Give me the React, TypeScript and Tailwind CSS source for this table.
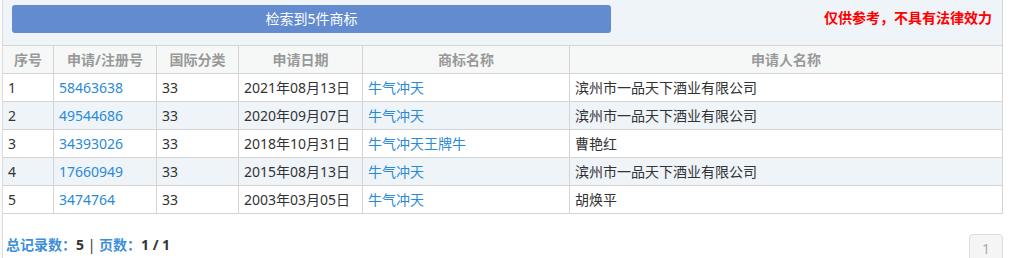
import React from "react";

const rows = [
  { no: "1", reg: "58463638", cls: "33", date: "2021年08月13日", name: "牛气冲天", app: "滨州市一品天下酒业有限公司" },
  { no: "2", reg: "49544686", cls: "33", date: "2020年09月07日", name: "牛气冲天", app: "滨州市一品天下酒业有限公司" },
  { no: "3", reg: "34393026", cls: "33", date: "2018年10月31日", name: "牛气冲天王牌牛", app: "曹艳红" },
  { no: "4", reg: "17660949", cls: "33", date: "2015年08月13日", name: "牛气冲天", app: "滨州市一品天下酒业有限公司" },
  { no: "5", reg: "3474764", cls: "33", date: "2003年03月05日", name: "牛气冲天", app: "胡焕平" },
];

const widths = ["w-[51px]", "w-[103px]", "w-[82px]", "w-[124px]", "w-[207px]", "w-[433px]"];
const heads = ["序号", "申请/注册号", "国际分类", "申请日期", "商标名称", "申请人名称"];

export default function App() {
  return (
    <div
      className="w-[1018px] h-[258px] bg-white flex overflow-hidden"
      style={{ fontFamily: '"Noto Sans", "Noto Sans CJK SC", sans-serif' }}
    >
      <div className="w-[2px] bg-[#fafafa] shrink-0" />
      <div className="w-[1001px] border-l border-[#dcdcdc] flex flex-col shrink-0">
        <div className="h-[45px] shrink-0 w-[1000px] bg-[#eff4f8] border-r border-[#d4d4d4] flex items-start justify-between">
          <div className="ml-[9px] mt-[5px] w-[599px] h-[28px] rounded-[3px] bg-[#638bcf] text-white text-[14px] leading-[28px] text-center">
            检索到5件商标
          </div>
          <div className="mt-[8px] mr-[10px] text-[14px] leading-[20px] font-bold text-[#ff0000]">
            仅供参考，不具有法律效力
          </div>
        </div>
        <div className="w-[1000px] flex flex-col shrink-0">
          <div className="flex h-[29px] shrink-0 bg-[#f6f8f8] border-t border-b border-[#d4d4d4]">
            {heads.map((h, i) => (
              <div
                key={h}
                className={`${widths[i]} h-[27px] flex items-center justify-center text-[14px] font-bold text-[#999999] border-r border-[#d4d4d4] shrink-0`}
              >
                {h}
              </div>
            ))}
          </div>
          {rows.map((r, ri) => {
            const vals = [r.no, r.reg, r.cls, r.date, r.name, r.app];
            return (
              <div
                key={r.no}
                className={`flex h-[28px] shrink-0 border-b border-[#d4d4d4] ${ri % 2 === 1 ? "bg-[#eff4f9]" : "bg-white"}`}
              >
                {vals.map((v, i) => (
                  <div
                    key={i}
                    className={`${widths[i]} h-[27px] flex items-center pl-[5px] text-[14px] border-r border-[#d4d4d4] shrink-0 ${
                      i === 1 || i === 4 ? "text-[#2a8ad6]" : "text-[#333333]"
                    }`}
                  >
                    {v}
                  </div>
                ))}
              </div>
            );
          })}
        </div>
        <div className="flex justify-between items-start w-[1000px] shrink-0 h-[44px]">
          <div className="mt-[21px] ml-[3px] text-[14px] leading-[20px]">
            <span className="text-[#3d8fd9] font-bold">总记录数：</span>
            <span className="text-[#333333] font-bold">5</span>
            <span className="text-[#333333]"> | </span>
            <span className="text-[#3d8fd9] font-bold">页数：</span>
            <span className="text-[#333333] font-bold">1 / 1</span>
          </div>
          <div className="mt-[20px] w-[34px] h-[34px] shrink-0 rounded-[4px] border border-[#dddddd] bg-[#f5f5f5] text-[#aaaaaa] text-[14px] flex justify-center pt-[3px]">
            1
          </div>
        </div>
      </div>
    </div>
  );
}
